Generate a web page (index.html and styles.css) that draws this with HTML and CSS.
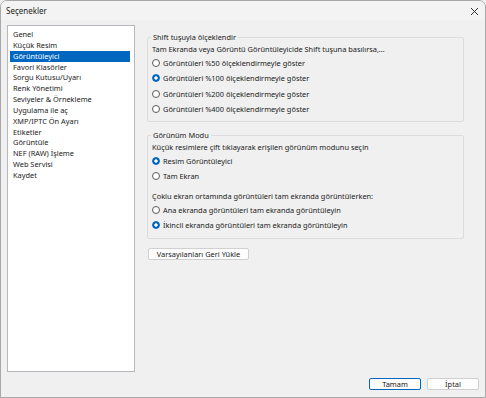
FILE: index.html
```html
<!DOCTYPE html>
<html lang="tr">
<head>
    <meta charset="UTF-8">
    <meta name="viewport" content="width=device-width, initial-scale=1.0">
    <title>Seçenekler</title>
    <link rel="stylesheet" href="styles.css">
</head>
<body>
    <div class="window">
        <div class="titlebar">
            <span class="title">Seçenekler</span>
            <svg class="close" width="9" height="9" viewBox="0 0 9 9">
                <path d="M1 1 L8 8 M8 1 L1 8" stroke="#333" stroke-width="1" fill="none"/>
            </svg>
        </div>

        <div class="main">
            <ul class="nav-list">
                <li>Genel</li>
                <li>Küçük Resim</li>
                <li class="selected">Görüntüleyici</li>
                <li>Favori Klasörler</li>
                <li>Sorgu Kutusu/Uyarı</li>
                <li>Renk Yönetimi</li>
                <li>Seviyeler &amp; Örnekleme</li>
                <li>Uygulama ile aç</li>
                <li>XMP/IPTC Ön Ayarı</li>
                <li>Etiketler</li>
                <li>Görüntüle</li>
                <li>NEF (RAW) İşleme</li>
                <li>Web Servisi</li>
                <li>Kaydet</li>
            </ul>

            <div class="panel">
                <fieldset class="group group-scale">
                    <legend>Shift tuşuyla ölçeklendir</legend>
                    <p class="desc">Tam Ekranda veya Görüntü Görüntüleyicide Shift tuşuna basılırsa,...</p>
                    <label class="option"><input type="radio" name="scale"> Görüntüleri %50 ölçeklendirmeyle göster</label>
                    <label class="option"><input type="radio" name="scale" checked> Görüntüleri %100 ölçeklendirmeyle göster</label>
                    <label class="option"><input type="radio" name="scale"> Görüntüleri %200 ölçeklendirmeyle göster</label>
                    <label class="option"><input type="radio" name="scale"> Görüntüleri %400 ölçeklendirmeyle göster</label>
                </fieldset>

                <fieldset class="group group-mode">
                    <legend>Görünüm Modu</legend>
                    <p class="desc">Küçük resimlere çift tıklayarak erişilen görünüm modunu seçin</p>
                    <label class="option"><input type="radio" name="mode" checked> Resim Görüntüleyici</label>
                    <label class="option"><input type="radio" name="mode"> Tam Ekran</label>
                    <p class="desc desc-gap">Çoklu ekran ortamında görüntüleri tam ekranda görüntülerken:</p>
                    <label class="option"><input type="radio" name="screen"> Ana ekranda görüntüleri tam ekranda görüntüleyin</label>
                    <label class="option"><input type="radio" name="screen" checked> İkincil ekranda görüntüleri tam ekranda görüntüleyin</label>
                </fieldset>

                <button class="btn btn-reset">Varsayılanları Geri Yükle</button>
            </div>
        </div>

        <div class="footer">
            <button class="btn btn-default">Tamam</button>
            <button class="btn">İptal</button>
        </div>
    </div>
</body>
</html>
```

FILE: styles.css
```css
* {
    margin: 0;
    padding: 0;
    box-sizing: border-box;
}

body {
    font-family: "Segoe UI", "Noto Sans", "Open Sans", sans-serif;
    font-size: 7.4px;
    color: #1b1b1b;
    background: #f0f0f0;
}

.window {
    width: 486px;
    height: 398px;
    display: flex;
    flex-direction: column;
    background: #f0f0f0;
    border: 1px solid #a8a8a8;
    border-radius: 7px 7px 0 0;
    overflow: hidden;
}

.titlebar {
    height: 19px;
    display: flex;
    align-items: center;
    justify-content: space-between;
    padding: 0 6px 0 5px;
    background: #f3f3f3;
}

.title {
    font-size: 8px;
}

.close {
    margin-top: 1px;
}

.main {
    flex: 1;
    display: flex;
    padding: 5px 21px 0 6px;
}

.nav-list {
    list-style: none;
    width: 128px;
    height: 347px;
    background: #fff;
    border: 1px solid #b7b7bd;
    padding: 3px 2px;
}

.nav-list li {
    height: 10.85px;
    line-height: 10.85px;
    padding-left: 3px;
}

.nav-list li.selected {
    background: #0067c0;
    color: #fff;
    margin-right: 2px;
}

.panel {
    flex: 1;
    margin-left: 12px;
    padding-top: 8px;
}

.group {
    border: 1px solid #dcdcdc;
    border-radius: 2px;
    padding: 0 6px 0 4px;
}

.group legend {
    padding: 0 2px;
    margin-left: -1px;
    line-height: 9px;
}

.group-scale {
    height: 89px;
}

.group-mode {
    margin-top: 9px;
    height: 108px;
}

.desc {
    height: 12px;
    line-height: 12px;
    margin-top: 1px;
}

.desc-gap {
    margin-top: 6px;
}

.option {
    display: flex;
    align-items: center;
    height: 15.5px;
}

.option input {
    appearance: none;
    -webkit-appearance: none;
    width: 8px;
    height: 8px;
    border: 1px solid #5a5a5a;
    border-radius: 50%;
    background: #fff;
    margin-right: 3px;
}

.option input:checked {
    border-color: #0067c0;
    background: radial-gradient(circle, #fff 0 1.4px, #0067c0 1.9px);
}

.btn {
    font-family: inherit;
    font-size: 7.4px;
    color: #1b1b1b;
    background: #fdfdfd;
    border: 1px solid #d0d0d0;
    border-radius: 2px;
    height: 12px;
    width: 52px;
}

.btn-reset {
    width: 101px;
    margin-top: 9px;
    margin-left: 1px;
}

.footer {
    display: flex;
    justify-content: flex-end;
    gap: 6px;
    padding: 6px 6px 7px 0;
}

.btn-default {
    border: 1px solid #0067c0;
}
```
